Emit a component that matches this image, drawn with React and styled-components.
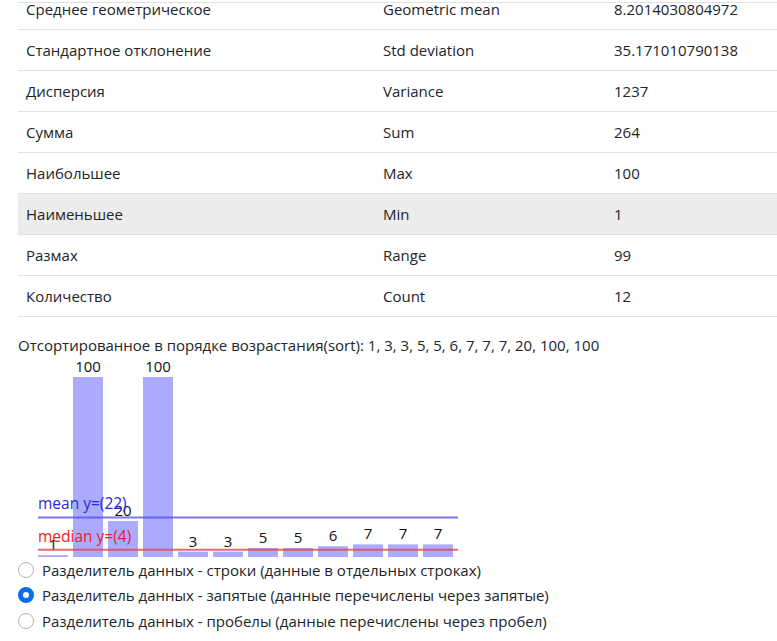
import React from "react";
import styled, { createGlobalStyle } from "styled-components";

const Global = createGlobalStyle`
  html, body { margin: 0; padding: 0; background: #fff; }
  body {
    font-family: "Open Sans", "Noto Sans", "Liberation Sans", sans-serif;
    font-size: 15px;
    color: #212529;
    overflow: hidden;
  }
`;

const Page = styled.div`
  margin-top: -11px;
  padding-left: 18px;
`;

const ScrollEdge = styled.div`
  position: fixed;
  top: 0;
  left: 18px;
  right: 0;
  height: 2px;
  border-bottom: 1px solid #dee2e6;
  background: #fff;
`;

const Table = styled.div`
  display: grid;
  grid-template-columns: 357px 231px 1fr;
`;

const Row = styled.div`
  display: contents;
  & > div {
    background: ${(p) => (p.$hover ? "#ececec" : "transparent")};
  }
`;

const Cell = styled.div`
  height: 40px;
  padding: 0 8px;
  display: flex;
  align-items: center;
  border-bottom: 1px solid #dee2e6;
  white-space: nowrap;
`;

const SortLine = styled.p`
  margin: 16px 0 0;
  line-height: 24px;
  height: 24px;
  white-space: nowrap;
`;

const Chart = styled.svg`
  display: block;
  overflow: visible;
`;

const Options = styled.div`
  display: flex;
  flex-direction: column;
  margin-top: -2px;
`;

const Option = styled.label`
  display: flex;
  align-items: center;
  height: 25.5px;
  gap: 8px;
  white-space: nowrap;
`;

const Radio = styled.input`
  appearance: none;
  -webkit-appearance: none;
  box-sizing: border-box;
  margin: 0 0 0 0;
  width: 16px;
  height: 16px;
  border-radius: 50%;
  border: 1px solid #b4b4b4;
  background: #fff;
  flex: none;
  &:checked {
    border: 5px solid #0a6ee8;
  }
`;

const rows = [
  ["Среднее геометрическое", "Geometric mean", "8.2014030804972"],
  ["Стандартное отклонение", "Std deviation", "35.171010790138"],
  ["Дисперсия", "Variance", "1237"],
  ["Сумма", "Sum", "264"],
  ["Наибольшее", "Max", "100"],
  ["Наименьшее", "Min", "1", true],
  ["Размах", "Range", "99"],
  ["Количество", "Count", "12"],
];

const data = [1, 100, 20, 100, 3, 3, 5, 5, 6, 7, 7, 7];
const BASE = 200;
const K = 1.8;
const X0 = 20;

function BarChart() {
  const meanY = BASE - 22 * K;
  const medY = BASE - 4 * K;
  return (
    <Chart width="460" height="202" viewBox="0 0 460 202">
      {data.map((v, i) => {
        const h = v * K;
        const x = X0 + i * 35;
        return (
          <g key={i}>
            <rect x={x} y={BASE - h} width="30" height={h} fill="#aaaaff" />
            <text
              x={x + 15}
              y={BASE - h - 5}
              textAnchor="middle"
              fontSize="15"
              fill="#111"
              fontFamily="Open Sans, sans-serif"
            >
              {v}
            </text>
          </g>
        );
      })}
      <line x1={X0} x2={X0 + 420} y1={meanY} y2={meanY} stroke="#5555ee" strokeOpacity="0.8" strokeWidth="2" />
      <text x={X0} y={meanY - 8} fontSize="15.5" fill="#2a2ad8" fontFamily="Open Sans, sans-serif">
        mean y=(22)
      </text>
      <line x1={X0} x2={X0 + 420} y1={medY} y2={medY} stroke="#e04848" strokeOpacity="0.8" strokeWidth="2" />
      <text x={X0} y={medY - 8} fontSize="15.5" fill="#ee2222" fontFamily="Open Sans, sans-serif">
        median y=(4)
      </text>
    </Chart>
  );
}

export default function App() {
  return (
    <>
      <Global />
      <ScrollEdge />
      <Page>
        <Table>
          {rows.map(([a, b, c, hover]) => (
            <Row key={a} $hover={hover}>
              <Cell>{a}</Cell>
              <Cell>{b}</Cell>
              <Cell>{c}</Cell>
            </Row>
          ))}
        </Table>
        <SortLine>
          Отсортированное в порядке возрастания(sort): 1, 3, 3, 5, 5, 6, 7, 7, 7, 20, 100, 100
        </SortLine>
        <BarChart />
        <Options>
          <Option>
            <Radio type="radio" name="sep" />
            Разделитель данных - строки (данные в отдельных строках)
          </Option>
          <Option>
            <Radio type="radio" name="sep" defaultChecked />
            Разделитель данных - запятые (данные перечислены через запятые)
          </Option>
          <Option>
            <Radio type="radio" name="sep" />
            Разделитель данных - пробелы (данные перечислены через пробел)
          </Option>
        </Options>
      </Page>
    </>
  );
}
